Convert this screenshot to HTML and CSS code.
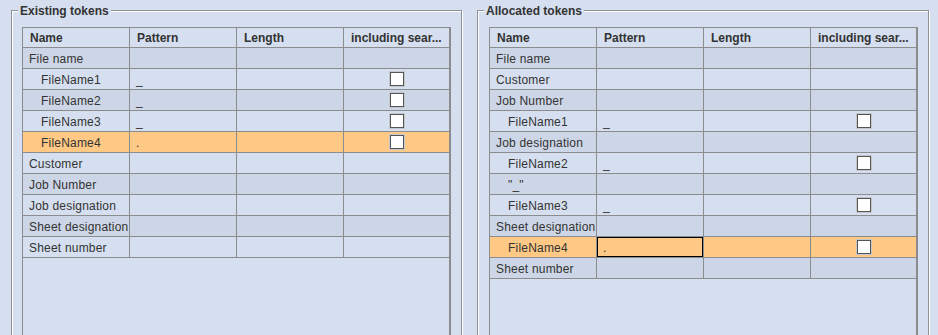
FILE: index.html
```html
<!DOCTYPE html>
<html lang="en">
<head>
  <meta charset="UTF-8" />
  <title>Tokens</title>
  <link rel="stylesheet" href="styles.css">
</head>
<body>
  <div class="tokens">
    <div class="panel">
      <span class="panel-title">Existing tokens</span>
      <div class="scroll">
        <table class="grid">
          <thead>
            <tr><th>Name</th><th>Pattern</th><th>Length</th><th>including sear...</th></tr>
          </thead>
          <tbody>
            <tr><td>File name</td><td></td><td></td><td class="check"></td></tr>
            <tr><td class="sub">FileName1</td><td>_</td><td></td><td class="check"><span class="box"></span></td></tr>
            <tr><td class="sub">FileName2</td><td>_</td><td></td><td class="check"><span class="box"></span></td></tr>
            <tr><td class="sub">FileName3</td><td>_</td><td></td><td class="check"><span class="box"></span></td></tr>
            <tr class="selected"><td class="sub">FileName4</td><td>.</td><td></td><td class="check"><span class="box"></span></td></tr>
            <tr><td>Customer</td><td></td><td></td><td class="check"></td></tr>
            <tr><td>Job Number</td><td></td><td></td><td class="check"></td></tr>
            <tr><td>Job designation</td><td></td><td></td><td class="check"></td></tr>
            <tr><td>Sheet designation</td><td></td><td></td><td class="check"></td></tr>
            <tr><td>Sheet number</td><td></td><td></td><td class="check"></td></tr>
          </tbody>
        </table>
      </div>
    </div>

    <div class="panel panel-right">
      <span class="panel-title">Allocated tokens</span>
      <div class="scroll">
        <table class="grid">
          <thead>
            <tr><th>Name</th><th>Pattern</th><th>Length</th><th>including sear...</th></tr>
          </thead>
          <tbody>
            <tr><td>File name</td><td></td><td></td><td class="check"></td></tr>
            <tr><td>Customer</td><td></td><td></td><td class="check"></td></tr>
            <tr><td>Job Number</td><td></td><td></td><td class="check"></td></tr>
            <tr><td class="sub">FileName1</td><td>_</td><td></td><td class="check"><span class="box"></span></td></tr>
            <tr><td>Job designation</td><td></td><td></td><td class="check"></td></tr>
            <tr><td class="sub">FileName2</td><td>_</td><td></td><td class="check"><span class="box"></span></td></tr>
            <tr><td class="sub">"_"</td><td></td><td></td><td class="check"></td></tr>
            <tr><td class="sub">FileName3</td><td>_</td><td></td><td class="check"><span class="box"></span></td></tr>
            <tr><td>Sheet designation</td><td></td><td></td><td class="check"></td></tr>
            <tr class="selected"><td class="sub">FileName4</td><td class="focus">.</td><td></td><td class="check"><span class="box"></span></td></tr>
            <tr><td>Sheet number</td><td></td><td></td><td class="check"></td></tr>
          </tbody>
        </table>
      </div>
    </div>
  </div>
</body>
</html>
```
FILE: styles.css
```css
body {
  margin: 0;
  background: #d6dfef;
  color: #333;
  font-family: "Liberation Sans", Arial, sans-serif;
  font-size: 12px;
  overflow: hidden;
}
.tokens {
  display: flex;
  gap: 15px;
  padding: 10px 0 0 11px;
}
.panel {
  position: relative;
  width: 451px;
  height: 360px;
  box-sizing: border-box;
  padding: 16px 10px 0 10px;
  border: 1px solid #8e9296;
  box-shadow: inset 1px 1px 0 #fff, 1px 1px 0 #fff;
}
.panel-right {
  width: 452px;
  padding-left: 11px;
}
.panel-title {
  position: absolute;
  top: -7px;
  left: 6px;
  padding: 0 2px;
  background: #d6dfef;
  font-weight: bold;
  line-height: 14px;
  color: #333;
}
.scroll {
  width: 429px;
  height: 360px;
  box-sizing: border-box;
  border: 1px solid #8a8c8e;
  border-right-width: 2px;
}
.grid {
  border-collapse: separate;
  border-spacing: 0;
  table-layout: fixed;
  width: 426px;
}
.grid th,
.grid td {
  box-sizing: border-box;
  width: 107px;
  padding: 2px 0 0 7px;
  border-right: 1px solid #8a8c8e;
  border-bottom: 1px solid #8a8c8e;
  white-space: nowrap;
  overflow: hidden;
  text-align: left;
  vertical-align: top;
}
.grid th {
  font-weight: bold;
  line-height: 17px;
}
.grid td {
  padding-left: 6px;
  line-height: 18px;
  letter-spacing: 0.2px;
}
.grid th:last-child,
.grid td:last-child {
  width: 105px;
  border-right: none;
}
.grid tbody tr:nth-child(odd) {
  background: #cdd6e6;
}
.grid tbody tr.selected {
  background: #ffc985;
}
.grid td.sub {
  padding-left: 18px;
}
.grid td.focus {
  box-shadow: inset 0 0 0 1px #000;
}
.grid td.check {
  padding: 0;
  line-height: 0;
  height: 21px;
}
.box {
  display: block;
  width: 14px;
  height: 14px;
  box-sizing: border-box;
  margin: 3px auto 0;
  background: #fff;
  border: 1px solid #555;
  box-shadow: 0 0 0 1px #c4c8cc;
}
```
